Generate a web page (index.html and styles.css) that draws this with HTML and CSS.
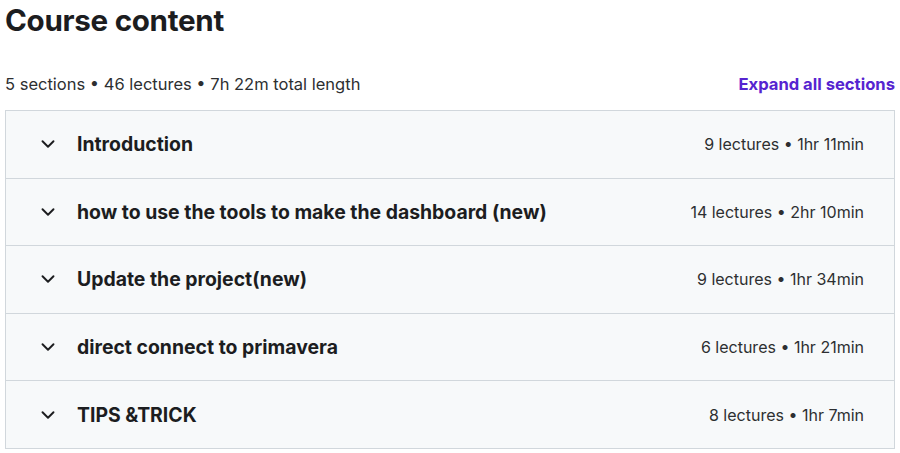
FILE: index.html
```html
<!DOCTYPE html>
<html lang="en">
<head>
    <meta charset="UTF-8">
    <title>Course content</title>
    <link rel="stylesheet" href="styles.css">
</head>
<body>
    <div class="curriculum">
        <h2 class="title">Course content</h2>

        <div class="summary">
            <span>5 sections • 46 lectures • 7h 22m total length</span>
            <button class="expand">Expand all sections</button>
        </div>

        <div class="sections">
            <div class="section">
                <svg class="chevron" viewBox="0 0 24 24"><path d="M6 9l6 6 6-6"/></svg>
                <span class="section-title">Introduction</span>
                <span class="section-meta">9 lectures • 1hr 11min</span>
            </div>
            <div class="section">
                <svg class="chevron" viewBox="0 0 24 24"><path d="M6 9l6 6 6-6"/></svg>
                <span class="section-title">how to use the tools to make the dashboard (new)</span>
                <span class="section-meta">14 lectures • 2hr 10min</span>
            </div>
            <div class="section">
                <svg class="chevron" viewBox="0 0 24 24"><path d="M6 9l6 6 6-6"/></svg>
                <span class="section-title">Update the project(new)</span>
                <span class="section-meta">9 lectures • 1hr 34min</span>
            </div>
            <div class="section">
                <svg class="chevron" viewBox="0 0 24 24"><path d="M6 9l6 6 6-6"/></svg>
                <span class="section-title">direct connect to primavera</span>
                <span class="section-meta">6 lectures • 1hr 21min</span>
            </div>
            <div class="section">
                <svg class="chevron" viewBox="0 0 24 24"><path d="M6 9l6 6 6-6"/></svg>
                <span class="section-title">TIPS &amp;TRICK</span>
                <span class="section-meta">8 lectures • 1hr 7min</span>
            </div>
        </div>
    </div>
</body>
</html>
```

FILE: styles.css
```css
body {
    margin: 0;
    padding: 0 5px;
    font-family: Inter, "Noto Sans", sans-serif;
    color: #2d2f31;
    background: #fff;
}

.title {
    margin: 0;
    padding-top: 2px;
    font-size: 29.6px;
    font-weight: 700;
    line-height: 36px;
    color: #1c1d1f;
    letter-spacing: -0.3px;
}

.summary {
    display: flex;
    justify-content: space-between;
    align-items: center;
    margin-top: 36px;
    height: 20px;
    font-size: 16.5px;
    color: #2d2f31;
}

.expand {
    border: none;
    background: none;
    padding: 0;
    font-family: inherit;
    font-size: 16.6px;
    font-weight: 700;
    color: #5624d0;
    cursor: pointer;
}

/* Section list */
.sections {
    margin-top: 16px;
    border: 1px solid #d1d7dc;
}

.section {
    display: flex;
    align-items: center;
    height: 66.6px;
    padding: 0 30px 0 30.5px;
    background: #f7f9fa;
    border-bottom: 1px solid #d1d7dc;
}

.section:last-child {
    border-bottom: none;
}

.chevron {
    flex-shrink: 0;
    width: 22px;
    height: 22px;
    fill: none;
    stroke: #1c1d1f;
    stroke-width: 2.1;
    stroke-linecap: round;
    stroke-linejoin: round;
    margin-right: 18.5px;
}

.section-title {
    flex: 1;
    font-size: 19.4px;
    font-weight: 700;
    color: #1c1d1f;
}

.section-meta {
    font-size: 16px;
    color: #2d2f31;
}
```
